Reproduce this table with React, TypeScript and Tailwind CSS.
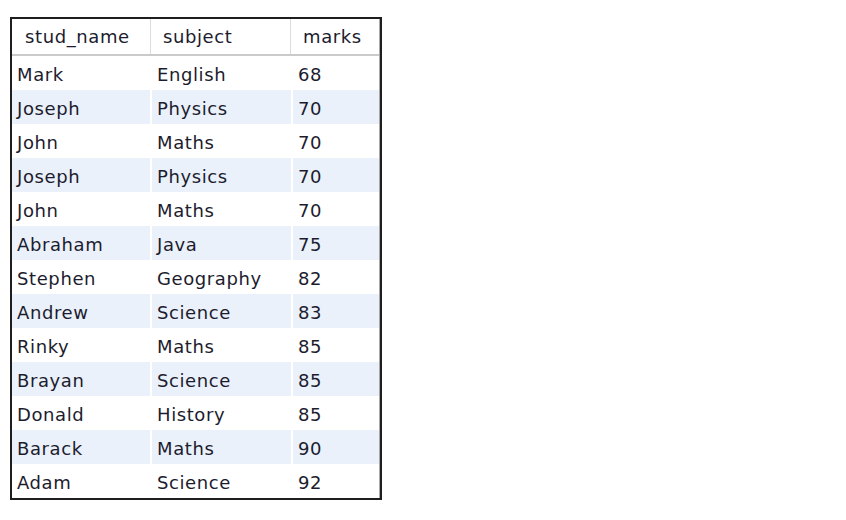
import React from 'react';

const rows = [
  ['Mark', 'English', '68'],
  ['Joseph', 'Physics', '70'],
  ['John', 'Maths', '70'],
  ['Joseph', 'Physics', '70'],
  ['John', 'Maths', '70'],
  ['Abraham', 'Java', '75'],
  ['Stephen', 'Geography', '82'],
  ['Andrew', 'Science', '83'],
  ['Rinky', 'Maths', '85'],
  ['Brayan', 'Science', '85'],
  ['Donald', 'History', '85'],
  ['Barack', 'Maths', '90'],
  ['Adam', 'Science', '92'],
];

export default function App() {
  return (
    <div className="w-[846px] h-[520px] bg-white pt-[17px] pl-[10px] font-['DejaVu_Sans',sans-serif] text-[18px] tracking-[0.6px] text-[#1c1c2e]">
      <div className="w-[372px] border-2 border-[#1e1e1e] bg-white">
        <div className="border-r border-[#a8a8a8]">
          {/* Header */}
          <div className="flex h-[37px] border-b-2 border-[#cacaca]">
            <div className="w-[139px] h-full flex items-center pl-[13px] border-r border-[#dcdcdc]">stud_name</div>
            <div className="w-[140px] h-full flex items-center pl-[12px] border-r border-[#dcdcdc]">subject</div>
            <div className="flex-1 h-full flex items-center pl-[12px]">marks</div>
          </div>
          {/* Rows */}
          {rows.map((r, i) => (
            <div key={i} className="flex h-[34px] gap-[2px]">
              {r.map((c, j) => (
                <div
                  key={j}
                  className={`h-full flex items-center pl-[5px] pt-[3px] ${j === 0 ? 'w-[138px]' : j === 1 ? 'w-[139px]' : 'flex-1'} ${i % 2 === 1 ? 'bg-[#eaf1fb]' : ''}`}
                >
                  {c}
                </div>
              ))}
            </div>
          ))}
        </div>
      </div>
    </div>
  );
}
